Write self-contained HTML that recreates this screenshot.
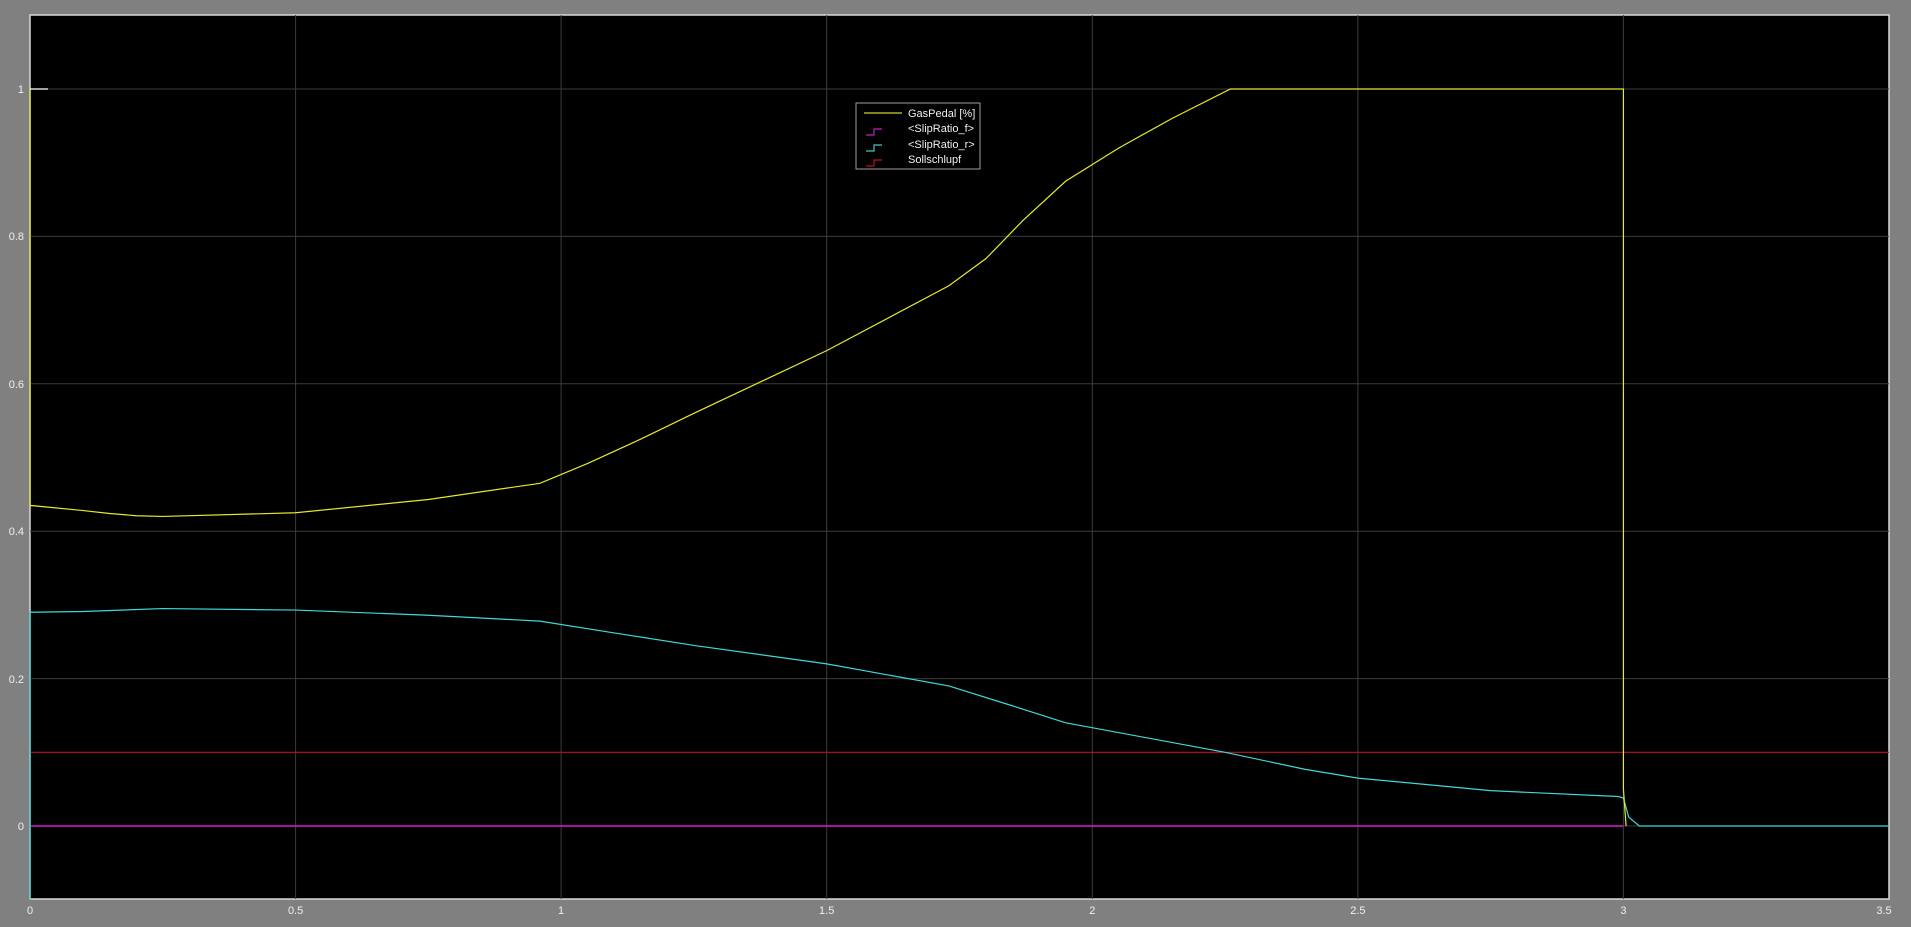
<!DOCTYPE html>
<html><head><style>
html,body{margin:0;padding:0;background:#808080;width:1911px;height:927px;overflow:hidden}
svg{display:block}
text{font-family:"Liberation Sans",sans-serif;font-size:11px;fill:#f0f0f0}
</style></head><body>
<svg width="1911" height="927" xmlns="http://www.w3.org/2000/svg">
<rect x="0" y="0" width="1911" height="927" fill="#808080"/>
<rect x="30" y="15" width="1859" height="884" fill="#000" stroke="#d8d8d8" stroke-width="1.5"/>
<g stroke="#3c3c3c" stroke-width="1">
<line x1="295.6" y1="15" x2="295.6" y2="899"/>
<line x1="561.1" y1="15" x2="561.1" y2="899"/>
<line x1="826.7" y1="15" x2="826.7" y2="899"/>
<line x1="1092.3" y1="15" x2="1092.3" y2="899"/>
<line x1="1357.9" y1="15" x2="1357.9" y2="899"/>
<line x1="1623.4" y1="15" x2="1623.4" y2="899"/>
<line x1="30" y1="89" x2="1889" y2="89"/>
<line x1="30" y1="236.4" x2="1889" y2="236.4"/>
<line x1="30" y1="383.8" x2="1889" y2="383.8"/>
<line x1="30" y1="531.2" x2="1889" y2="531.2"/>
<line x1="30" y1="678.6" x2="1889" y2="678.6"/>
<line x1="30" y1="826" x2="1889" y2="826"/>
</g>
<g text-anchor="end">
<text x="24" y="93">1</text><text x="24" y="240">0.8</text><text x="24" y="388">0.6</text>
<text x="24" y="535">0.4</text><text x="24" y="683">0.2</text><text x="24" y="830">0</text>
</g>
<g text-anchor="middle">
<text x="30" y="914">0</text><text x="295.6" y="914">0.5</text><text x="561.1" y="914">1</text>
<text x="826.7" y="914">1.5</text><text x="1092.3" y="914">2</text><text x="1357.9" y="914">2.5</text>
<text x="1623.4" y="914">3</text><text x="1884" y="914">3.5</text>
</g>
<g transform="matrix(531.14,0,0,-737,30,826)" fill="none">
<polyline vector-effect="non-scaling-stroke" stroke="#c01020" stroke-width="1.2" points="0,0.1 3.5,0.1"/>
<polyline vector-effect="non-scaling-stroke" stroke="#d020d0" stroke-width="1.5" points="0,0 3,0"/>
<polyline vector-effect="non-scaling-stroke" stroke="#40d8d8" stroke-width="1.2" points="0,-0.1 0,0.29 0.1,0.291 0.25,0.295 0.5,0.293 0.75,0.286 0.96,0.278 1.1,0.262 1.25,0.245 1.5,0.22 1.73,0.19 1.85,0.163 1.95,0.14 2.1,0.12 2.25,0.1 2.4,0.077 2.5,0.065 2.75,0.048 2.99,0.04 3.0,0.038 3.01,0.012 3.03,0 3.5,0"/>
<polyline vector-effect="non-scaling-stroke" stroke="#e8e830" stroke-width="1.2" points="0,1 0,0.435 0.1,0.428 0.15,0.424 0.2,0.421 0.25,0.42 0.5,0.425 0.75,0.443 0.96,0.465 1.05,0.492 1.15,0.525 1.25,0.56 1.5,0.645 1.73,0.733 1.8,0.77 1.87,0.822 1.95,0.875 2.05,0.92 2.15,0.96 2.26,1 3.0,1 3.0,0.05 3.005,0"/>
</g>
<line x1="30" y1="89" x2="48" y2="89" stroke="#fff" stroke-width="1.2"/>
<rect x="856" y="103" width="124" height="66" fill="#000" stroke="#a0a0a0" stroke-width="1"/>
<line x1="864" y1="113" x2="902" y2="113" stroke="#d0d030" stroke-width="1.2"/>
<path d="M866 135 H874 V129 H882" fill="none" stroke="#c020c0" stroke-width="1.2"/>
<path d="M866 151 H874 V145 H882" fill="none" stroke="#40c8c8" stroke-width="1.2"/>
<path d="M866 166 H874 V160 H882" fill="none" stroke="#c01020" stroke-width="1.2"/>
<g style="font-size:10.5px">
<text x="908" y="117">GasPedal [%]</text>
<text x="908" y="132">&lt;SlipRatio_f&gt;</text>
<text x="908" y="148">&lt;SlipRatio_r&gt;</text>
<text x="908" y="163">Sollschlupf</text>
</g>
</svg>
</body></html>
